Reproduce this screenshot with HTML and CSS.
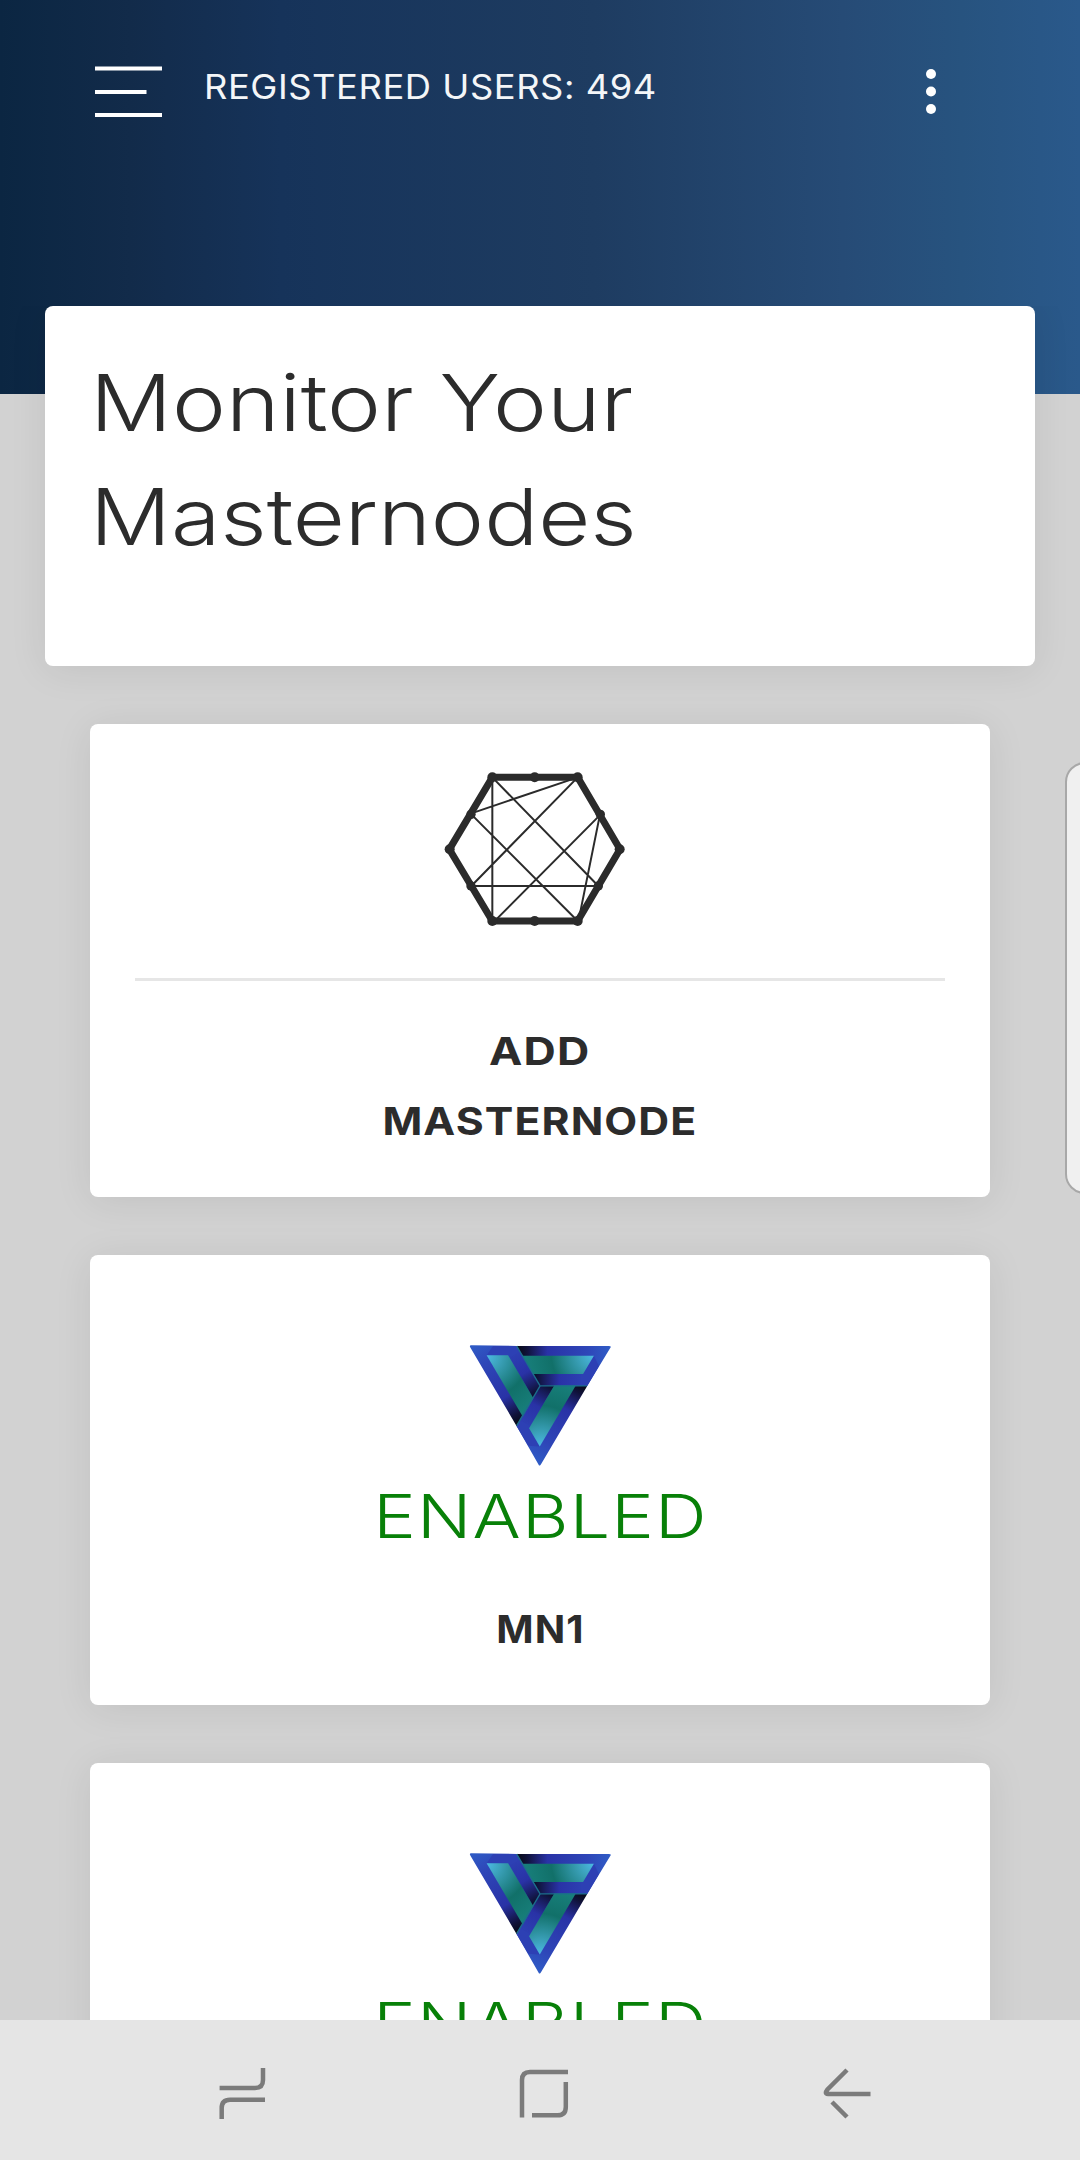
FILE: index.html
```html
<!DOCTYPE html>
<html lang="en">
<head>
<meta charset="utf-8">
<title>Monitor Your Masternodes</title>
<link rel="stylesheet" href="styles.css">
</head>
<body>
<svg class="defs" aria-hidden="true">
  <defs>
    <linearGradient id="outer" gradientUnits="userSpaceOnUse" x1="205" y1="0" x2="480" y2="0">
      <stop offset="0" stop-color="#080a18"/><stop offset=".1" stop-color="#10123a"/><stop offset=".32" stop-color="#2932a6"/><stop offset=".75" stop-color="#2e46b8"/><stop offset="1" stop-color="#2f5cc6"/>
    </linearGradient>
    <linearGradient id="inner" gradientUnits="userSpaceOnUse" x1="255" y1="0" x2="400" y2="0">
      <stop offset="0" stop-color="#0c0f2c"/><stop offset=".5" stop-color="#2932a6"/><stop offset="1" stop-color="#2d40b4"/>
    </linearGradient>
    <radialGradient id="teal" gradientUnits="userSpaceOnUse" cx="430" cy="105" r="210">
      <stop offset="0" stop-color="#4dbbe6"/><stop offset=".22" stop-color="#3aa0b8"/><stop offset=".6" stop-color="#117069"/><stop offset="1" stop-color="#18807c"/>
    </radialGradient>
    <g id="arm">
      <path d="M201.300 78.100H474.500Q483 78.100 478.300 84.500L410.300 198.700H271Z" fill="url(#outer)"/>
      <path d="M250 163H398L410 198.700H271Z" fill="url(#inner)"/>
      <path d="M398 163L430 108L445 138.500L410.300 198.700H390V163Z" fill="#2d40b4"/>
      <path d="M216 108H430L398 163H249Z" fill="url(#teal)"/>
    </g>
    <path id="seam" d="M202 79L271 198.700" fill="none" stroke="#1b6e8c" stroke-width="4"/>
    <symbol id="coin" viewBox="0 0 540 480">
      <g transform="translate(-4.800 0) scale(1.015 .995)">
        <use href="#arm"/>
        <use href="#arm" transform="rotate(120 271 198.700)"/>
        <use href="#arm" transform="rotate(240 271 198.700)"/>
        <use href="#seam"/>
        <use href="#seam" transform="rotate(120 271 198.700)"/>
        <use href="#seam" transform="rotate(240 271 198.700)"/>
      </g>
    </symbol>
  </defs>
</svg>
<div class="screen">
  <header class="topbar">
    <svg class="menu" viewBox="0 0 68 52"><path d="M0 2.500H67M0 26H51.500M0 49H67" /></svg>
    <span class="users">REGISTERED USERS: 494</span>
    <svg class="more" viewBox="0 0 10 46"><circle cx="5" cy="5" r="5"/><circle cx="5" cy="22.500" r="5"/><circle cx="5" cy="40" r="5"/></svg>
  </header>
  <main class="content">
    <section class="card hero"><h1><span class="wide first">Monitor Your</span><br><span class="wide">Masternodes</span></h1></section>
    <section class="card add">
      <svg class="hex" viewBox="0 0 660 600">
        <path class="ring" d="M187 82H443L570 298L443 513H187L58 298Z"/>
        <path class="web" d="M187 82V513M124 190L443 82M187 82L505 408M443 82L124 408M124 193L443 513M512 193L187 520M510 193L447 505M124 408H505"/>
        <g><circle cx="187" cy="82" r="15"/><circle cx="314" cy="82" r="15"/><circle cx="443" cy="82" r="15"/><circle cx="511" cy="193" r="14"/><circle cx="569" cy="298" r="15"/><circle cx="505" cy="408" r="14"/><circle cx="443" cy="513" r="15"/><circle cx="314" cy="513" r="15"/><circle cx="187" cy="513" r="15"/><circle cx="123" cy="408" r="14"/><circle cx="59" cy="298" r="15"/><circle cx="123" cy="193" r="14"/></g>
      </svg>
      <hr>
      <p class="label"><span class="add-word">ADD</span><br><span class="node-word">MASTERNODE</span></p>
    </section>
    <section class="card node">
      <svg class="coin"><use href="#coin"/></svg>
      <p class="status">ENABLED</p>
      <p class="label name">MN1</p>
    </section>
    <section class="card node">
      <svg class="coin"><use href="#coin"/></svg>
      <p class="status">ENABLED</p>
    </section>
  </main>
  <div class="edge"></div>
  <nav class="navbar">
    <svg viewBox="0 0 60 60"><path d="M6.600 28H42Q50 28 50 20V8M8.700 59V48Q8.700 39.700 17 39.700H52"/></svg>
    <svg viewBox="0 0 60 60"><path d="M9 57.500V20Q9 12 17 12H55M52.800 22V47Q52.800 55.300 44.500 55.300H19"/></svg>
    <svg viewBox="0 0 60 60"><path d="M34 10L14.500 29.500Q11 34 15 34H57.500M19 42L34 57"/></svg>
  </nav>
</div>
</body>
</html>
```

FILE: styles.css
```css
* { box-sizing: border-box; }
body { margin: 0; font-family: Inter, "Liberation Sans", sans-serif; color: #2c2c2c; }
h1, p { margin: 0; }
svg { display: block; flex: none; }
.defs { position: absolute; width: 0; height: 0; }
.screen { position: relative; width: 1080px; height: 2160px; overflow: hidden; display: flex; flex-direction: column; background: #d2d2d2; }
.topbar { flex: none; height: 394px; padding: 66px 144px 0 95px; display: flex; align-items: flex-start;
  background: linear-gradient(90deg, #0b2642 0%, #122b4a 12%, #16335a 26%, #1e3c61 55%, #264b76 78%, #27537f 89%, #2a598b 100%); }
.menu { width: 68px; height: 52px; }
.menu path { stroke: #fff; stroke-width: 4; }
.users { margin: -4px 0 0 41px; font-size: 34px; line-height: 50px; color: #f4f6f8; letter-spacing: 0.500px; white-space: nowrap; transform: scaleX(1.069); transform-origin: left; }
.more { width: 10px; height: 46px; margin: 3px 0 0 auto; fill: #fff; }
.content { flex: 1; min-height: 0; margin-top: -88px; overflow: hidden; padding: 0 45px; display: flex; flex-direction: column; align-items: center; gap: 58px; }
.card { flex: none; width: 900px; background: #fff; border-radius: 8px; box-shadow: 0 4px 38px rgba(0,0,0,.08); display: flex; flex-direction: column; align-items: center; }
.hero { width: 990px; height: 360px; padding: 40px 48px; align-items: flex-start; }
.hero h1 { font-size: 78px; line-height: 114px; font-weight: 300; letter-spacing: 0; white-space: nowrap; margin-left: -3px; }
.wide { display: inline-block; transform: scaleX(1.152); transform-origin: left; }
.wide.first { transform: scaleX(1.167); }
.add { height: 473px; }
.hex { width: 220px; height: 200px; margin-top: 26px; fill: #2b2b2b; }
.ring { fill: none; stroke: #2b2b2b; stroke-width: 21; }
.web { fill: none; stroke: #2b2b2b; stroke-width: 6; }
hr { width: 810px; height: 3px; border: 0; background: #e6e6e6; margin: 28px 0 35px; }
.label { font-size: 38.500px; line-height: 70px; font-weight: 700; text-align: center; letter-spacing: 1px; }
.add-word { display: inline-block; transform: scaleX(1.160); }
.node-word { display: inline-block; transform: scaleX(1.110); }
.node { height: 450px; }
.coin { width: 180px; height: 160px; margin-top: 65px; }
.status { margin: -9px 0 0 1px; font-size: 61px; line-height: 90px; font-weight: 300; color: #088008; letter-spacing: 1px; transform: scaleX(1.174); }
.name { margin-top: 33px; transform: scaleX(1.040); }
.edge { position: absolute; left: 1065px; top: 762px; width: 40px; height: 432px; border: 2px solid #a8a8a8; border-radius: 22px; background: #f0f0f0; }
.navbar { flex: none; height: 140px; background: #e5e5e5; padding: 40px 207px 0 213px; display: flex; justify-content: space-between; }
.navbar svg { width: 60px; height: 60px; fill: none; stroke: #7b7b7b; stroke-width: 4.5; }
```
